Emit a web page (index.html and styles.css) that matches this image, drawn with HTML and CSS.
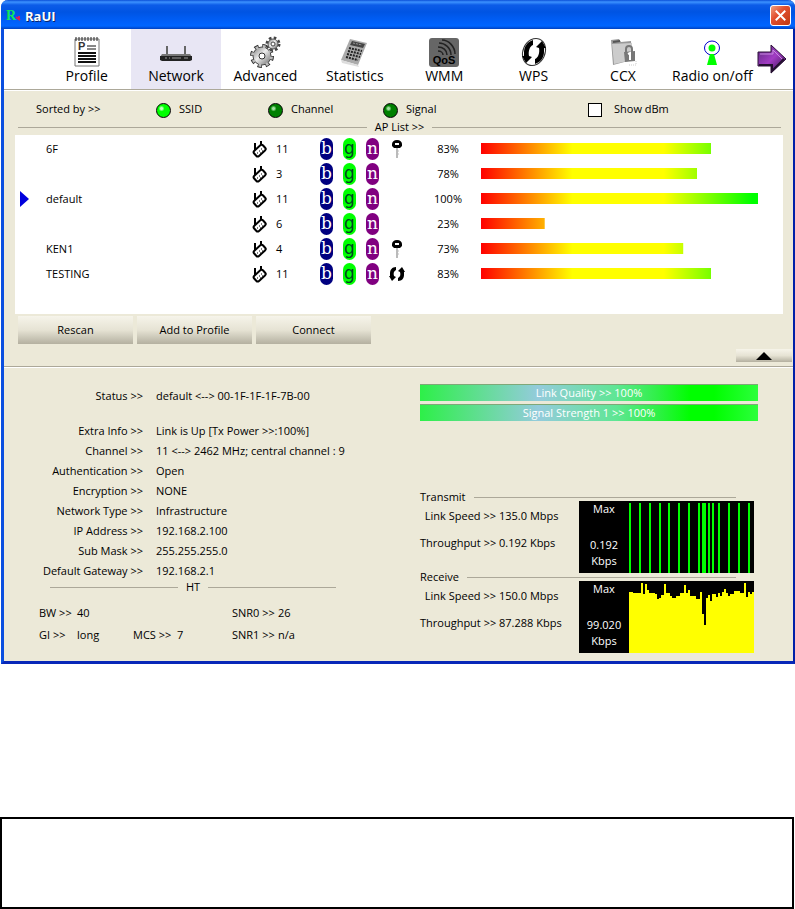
FILE: index.html
```html
<!DOCTYPE html>
<html lang="en">
<head>
  <meta charset="UTF-8" />
  <meta name="viewport" content="width=device-width, initial-scale=1.0" />
  <title>RaUI</title>
  <link rel="stylesheet" href="styles.css">
</head>
<body>

<!-- shared list icons -->
<svg class="sprite" aria-hidden="true">
  <symbol id="i-ap" viewBox="0 0 16 18">
    <path d="M3 3v9M9 1v7" stroke="#000" stroke-width="2"/>
    <rect x="2" y="7" width="12" height="7" rx="2" fill="#fff" stroke="#000" stroke-width="2" transform="rotate(-42 8 11)"/>
    <path d="M5 13h1M7 11h1M9 9h1M8 13h1M10 11h1" stroke="#000"/>
  </symbol>
  <symbol id="i-key" viewBox="0 0 16 20">
    <path d="M8 9v10" stroke="#bbb" stroke-width="2"/>
    <path d="M9 12h1M9 15h1" stroke="#bbb"/>
    <path d="M3 5c0-2 2-4 5-4s5 2 5 4v2l-2 2H5L3 7z" fill="#000"/>
    <path d="M6 5h4" stroke="#fff" stroke-width="2"/>
  </symbol>
  <symbol id="i-wps" viewBox="0 0 16 16">
    <path d="M7 1C3 1 1 4 1 7v3H0l3 5 4-4-2-1c-1-3 0-5 2-6z"/>
    <path d="M9 15c4 0 6-3 6-6V6h1l-3-5-4 4 2 1c1 3 0 5-2 6z"/>
  </symbol>
</svg>

<main class="window">
  <header class="titlebar">
    <svg class="app-icon" viewBox="0 0 16 16" aria-hidden="true">
      <text x="0" y="12" font-family="Liberation Serif, serif" font-size="14" font-weight="bold" fill="#10e860">R</text>
      <path d="M10 9l4 3M13 8v4" stroke="#d8205a" stroke-width="2"/>
    </svg>
    <h1>RaUI</h1>
    <button class="close" aria-label="Close">
      <svg viewBox="0 0 20 20"><path d="M5 5l10 10M15 5L5 15" stroke="#fff" stroke-width="2"/></svg>
    </button>
  </header>

  <nav class="toolbar">
    <button class="tool">
      <svg viewBox="0 0 34 32" aria-hidden="true">
        <path d="M5 3h24v27H5z" fill="#fff" stroke="#777"/>
        <path d="M6 1v4M9 1v4M12 1v4M15 1v4M18 1v4M21 1v4M24 1v4M27 1v4" stroke="#222"/>
        <text x="8" y="14" font-family="Liberation Sans, sans-serif" font-size="11" font-weight="bold" fill="#333">P</text>
        <path d="M17 10h9M17 13h9" stroke="#111"/>
        <path d="M8 17h18M8 20h18M8 23h18M8 26h18" stroke="#111" stroke-width="2"/>
      </svg>
      Profile
    </button>
    <button class="tool active">
      <svg viewBox="0 0 34 32" aria-hidden="true">
        <path d="M8 10v9M26 10v9" stroke="#666" stroke-width="2"/>
        <path d="M3 18h28l2 3H1z" fill="#777"/>
        <path d="M1 20h32v4l-2 1H3l-2-1z" fill="#222"/>
        <path d="M6 22h2M10 22h1M13 22h9M25 22h4" stroke="#999"/>
      </svg>
      Network
    </button>
    <button class="tool">
      <svg viewBox="0 0 34 32" aria-hidden="true">
        <defs>
          <linearGradient id="metal" x1="0" y1="0" x2="1" y2="1">
            <stop offset="0" stop-color="#777"/><stop offset=".45" stop-color="#eee"/><stop offset="1" stop-color="#666"/>
          </linearGradient>
        </defs>
        <circle cx="14" cy="20" r="9.5" fill="none" stroke="#333" stroke-width="5" stroke-dasharray="4 3.46"/>
        <circle cx="14" cy="20" r="9" fill="url(#metal)" stroke="#444"/>
        <circle cx="14" cy="20" r="9.5" fill="none" stroke="#bbb" stroke-width="3" stroke-dasharray="2.6 4.86" stroke-dashoffset="-.7"/>
        <circle cx="14" cy="20" r="3" fill="#fff" stroke="#333"/>
        <circle cx="25" cy="8" r="6" fill="none" stroke="#444" stroke-width="3" stroke-dasharray="2.5 2.21"/>
        <circle cx="25" cy="8" r="5" fill="url(#metal)" stroke="#555"/>
        <circle cx="25" cy="8" r="2" fill="#fff" stroke="#444"/>
      </svg>
      Advanced
    </button>
    <button class="tool">
      <svg viewBox="0 0 34 32" aria-hidden="true">
        <path d="M12 3l17 4-9 22-17-5z" fill="#aaa"/>
        <path d="M3 24l17 5 1 2-17-4z" fill="#ddd"/>
        <path d="M14 5l13 3-2 4-13-3z" fill="#444"/>
        <path d="M15 7l9 2" stroke="#999" stroke-dasharray="2 1"/>
        <path d="M11 12l13 3M10 15l13 3M9 18l13 3M8 21l12 3" stroke="#222" stroke-width="2" stroke-dasharray="2 1"/>
      </svg>
      Statistics
    </button>
    <button class="tool">
      <svg viewBox="0 0 34 32" aria-hidden="true">
        <rect x="2" y="2" width="30" height="29" rx="3" fill="#666"/>
        <g fill="none" stroke="#222" stroke-width="1.5">
          <path d="M11 15c3 0 5 2 5 4M11 11c5 0 9 3 9 8M12 7c6 0 12 5 12 12M15 4c7 0 13 7 13 14"/>
        </g>
        <text x="17" y="28" text-anchor="middle" font-family="Liberation Sans, sans-serif" font-size="11" font-weight="bold" fill="#000">QoS</text>
      </svg>
      WMM
    </button>
    <button class="tool">
      <svg viewBox="0 0 34 32" aria-hidden="true">
        <ellipse cx="17" cy="16" rx="11" ry="14" fill="#fff" stroke="#333" transform="rotate(24 17 16)"/>
        <path d="M16 4C10 6 7 11 7 16l0 4-2 0 4 7 6-6-3-1c-1-5 1-10 4-11z"/>
        <path d="M18 28c6-2 9-7 9-12l0-4 2 0-4-7-6 6 3 1c1 5-1 10-4 11z"/>
      </svg>
      WPS
    </button>
    <button class="tool">
      <svg viewBox="0 0 34 32" aria-hidden="true">
        <path d="M5 4l8-1 2 3 10-1 1 19-19 5z" fill="#999"/>
        <path d="M6 8l20-1v17L8 28z" fill="#ccc"/>
        <path d="M7 6l7-1" stroke="#555" stroke-width="2"/>
        <path d="M20 17v-4c0-4 6-4 6 0v4" fill="none" stroke="#777" stroke-width="2"/>
        <path d="M18 16l11-1v10l-10 1z" fill="#777"/>
        <path d="M22 18l2-1v7" fill="none" stroke="#fff" stroke-width="2"/>
        <path d="M23 29h7M30 25v4" stroke="#ccc" stroke-dasharray="1 1"/>
      </svg>
      CCX
    </button>
    <button class="tool">
      <svg viewBox="0 0 34 32" aria-hidden="true">
        <ellipse cx="17" cy="12" rx="7.5" ry="7" fill="#fff" stroke="#00c"/>
        <circle cx="17" cy="12" r="3.5" fill="#0f0"/>
        <path d="M15 18h4l3 11H12z" fill="#0f0"/>
      </svg>
      Radio on/off
    </button>
    <button class="more" aria-label="More">
      <svg viewBox="0 0 30 30">
        <defs>
          <linearGradient id="purple" x1="0" y1="0" x2="1" y2="1">
            <stop offset="0" stop-color="#5a2a7c"/><stop offset=".5" stop-color="#a23cc4"/><stop offset="1" stop-color="#2a0c40"/>
          </linearGradient>
        </defs>
        <path d="M1 8h13V1l15 14-15 14v-7H1z" fill="url(#purple)" stroke="#2c1038"/>
        <path d="M3 10h13V6l9 9" fill="none" stroke="#c88ae0"/>
        <path d="M2 21h13v6l12-12" fill="none" stroke="#241030" stroke-width="2"/>
      </svg>
    </button>
  </nav>

  <section class="ap-panel">
    <div class="sortbar">
      <span>Sorted by &gt;&gt;</span>
      <label><input class="led" type="radio" name="sort" checked> SSID</label>
      <label><input class="led" type="radio" name="sort"> Channel</label>
      <label><input class="led" type="radio" name="sort"> Signal</label>
      <label><input class="tick" type="checkbox"> Show dBm</label>
    </div>

    <h2 class="rule rule-mid">AP List &gt;&gt;</h2>

    <div class="ap-list">
      <table>
        <colgroup>
          <col class="c-mark"><col class="c-name"><col class="c-ap"><col class="c-chan">
          <col class="c-modes"><col class="c-sec"><col class="c-pct"><col>
        </colgroup>
        <tbody>
          <tr>
            <td></td><td>6F</td><td><svg class="ap"><use href="#i-ap"/></svg></td><td>11</td>
            <td><span class="mode b">b</span><span class="mode g">g</span><span class="mode n">n</span></td>
            <td><svg class="sec"><use href="#i-key"/></svg></td>
            <td>83%</td><td><div class="level" style="--level: 83"></div></td>
          </tr>
          <tr>
            <td></td><td></td><td><svg class="ap"><use href="#i-ap"/></svg></td><td>3</td>
            <td><span class="mode b">b</span><span class="mode g">g</span><span class="mode n">n</span></td>
            <td></td>
            <td>78%</td><td><div class="level" style="--level: 78"></div></td>
          </tr>
          <tr>
            <td><svg class="mark" viewBox="0 0 9 16"><path d="M0 0l9 8-9 8z" fill="#00d"/></svg></td>
            <td>default</td><td><svg class="ap"><use href="#i-ap"/></svg></td><td>11</td>
            <td><span class="mode b">b</span><span class="mode g">g</span><span class="mode n">n</span></td>
            <td></td>
            <td>100%</td><td><div class="level" style="--level: 100"></div></td>
          </tr>
          <tr>
            <td></td><td></td><td><svg class="ap"><use href="#i-ap"/></svg></td><td>6</td>
            <td><span class="mode b">b</span><span class="mode g">g</span><span class="mode n">n</span></td>
            <td></td>
            <td>23%</td><td><div class="level" style="--level: 23"></div></td>
          </tr>
          <tr>
            <td></td><td>KEN1</td><td><svg class="ap"><use href="#i-ap"/></svg></td><td>4</td>
            <td><span class="mode b">b</span><span class="mode g">g</span><span class="mode n">n</span></td>
            <td><svg class="sec"><use href="#i-key"/></svg></td>
            <td>73%</td><td><div class="level" style="--level: 73"></div></td>
          </tr>
          <tr>
            <td></td><td>TESTING</td><td><svg class="ap"><use href="#i-ap"/></svg></td><td>11</td>
            <td><span class="mode b">b</span><span class="mode g">g</span><span class="mode n">n</span></td>
            <td><svg class="sec"><use href="#i-wps"/></svg></td>
            <td>83%</td><td><div class="level" style="--level: 83"></div></td>
          </tr>
        </tbody>
      </table>
    </div>

    <div class="actions">
      <button class="btn">Rescan</button>
      <button class="btn">Add to Profile</button>
      <button class="btn">Connect</button>
      <button class="btn collapse" aria-label="Hide details">
        <svg viewBox="0 0 16 8"><path d="M8 0l8 8H0z"/></svg>
      </button>
    </div>
  </section>

  <section class="details">
    <div class="status">
      <dl class="info">
        <dt>Status &gt;&gt;</dt><dd>default &lt;--&gt; 00-1F-1F-1F-7B-00</dd>
      </dl>
      <dl class="info">
        <dt>Extra Info &gt;&gt;</dt><dd>Link is Up [Tx Power &gt;&gt;:100%]</dd>
        <dt>Channel &gt;&gt;</dt><dd>11 &lt;--&gt; 2462 MHz; central channel : 9</dd>
        <dt>Authentication &gt;&gt;</dt><dd>Open</dd>
        <dt>Encryption &gt;&gt;</dt><dd>NONE</dd>
        <dt>Network Type &gt;&gt;</dt><dd>Infrastructure</dd>
        <dt>IP Address &gt;&gt;</dt><dd>192.168.2.100</dd>
        <dt>Sub Mask &gt;&gt;</dt><dd>255.255.255.0</dd>
        <dt>Default Gateway &gt;&gt;</dt><dd>192.168.2.1</dd>
      </dl>
      <h2 class="rule rule-mid rule-ht">HT</h2>
      <div class="ht">
        <span>BW &gt;&gt;</span><span>40</span><span></span><span></span><span>SNR0 &gt;&gt;</span><span>26</span>
        <span>GI &gt;&gt;</span><span>long</span><span>MCS &gt;&gt;</span><span>7</span><span>SNR1 &gt;&gt;</span><span>n/a</span>
      </div>
    </div>

    <div class="signal">
      <div class="quality">Link Quality &gt;&gt; 100%</div>
      <div class="quality">Signal Strength 1 &gt;&gt; 100%</div>

      <h2 class="rule rule-traffic first">Transmit</h2>
      <div class="traffic">
        <dl class="rates">
          <dt>Link Speed &gt;&gt;</dt><dd>135.0 Mbps</dd>
          <dt>Throughput &gt;&gt;</dt><dd>0.192 Kbps</dd>
        </dl>
        <div class="chart">
          <div class="scale"><span>Max</span><span>0.192<br>Kbps</span></div>
          <svg viewBox="0 0 125 72" preserveAspectRatio="none" shape-rendering="crispEdges" aria-hidden="true">
            <path fill="#0f0" d="M0 2h2v70h-2zM10 2h2v70h-2zM20 2h2v70h-2zM30 2h2v70h-2zM39 2h2v70h-2zM49 2h2v70h-2zM59 2h2v70h-2zM69 2h2v70h-2zM73 2h4v70h-4zM79 2h2v70h-2zM83 2h2v70h-2zM89 2h2v70h-2zM99 2h2v70h-2zM109 2h2v70h-2zM119 2h2v70h-2z"/>
          </svg>
        </div>
      </div>

      <h2 class="rule rule-traffic">Receive</h2>
      <div class="traffic">
        <dl class="rates">
          <dt>Link Speed &gt;&gt;</dt><dd>150.0 Mbps</dd>
          <dt>Throughput &gt;&gt;</dt><dd>87.288 Kbps</dd>
        </dl>
        <div class="chart">
          <div class="scale"><span>Max</span><span>99.020<br>Kbps</span></div>
          <svg viewBox="0 0 125 72" preserveAspectRatio="none" shape-rendering="crispEdges" aria-hidden="true">
            <path fill="#ff0" d="M0 72V11h4V12h8V2h2V13h2V3h2V9h2V12h6V13h2V18h2V17h2V14h3V3h2V12h4V15h2V17h4V15h4V12h4V4h2V12h2V9h2V15h6V18h4V11h2V33h2V44h2V17h2V14h2V20h2V13h4V16h2V12h2V15h2V11h2V8h2V12h2V15h2V13h4V10h6V12h4V2h2V16h2V11h2V13h2V11h2V72z"/>
          </svg>
        </div>
      </div>
    </div>
  </section>
</main>

<div class="note-box"></div>

</body>
</html>
```
FILE: styles.css
```css
:root {
  --face: #ece9d8;
  --line: #aca899;
}

* {
  box-sizing: border-box;
}

body {
  margin: 0;
  background: #fff;
  color: #000;
  font-family: "Open Sans", "Noto Sans", sans-serif;
  font-size: 11px;
  line-height: 20px;
}

button {
  font: inherit;
  color: inherit;
  border: none;
  padding: 0;
  background: none;
}

h1, h2, dl, dd {
  margin: 0;
}

svg {
  display: block;
}

.sprite {
  display: none;
}

/* window frame */
.window {
  margin-left: 1px;
  border: solid #0a3fd0;
  border-width: 0 2px 3px 3px;
  border-color: #0a3fd0 #0020a8 #0828b8 #0a4fe0;
  border-radius: 7px 7px 0 0;
  background: var(--face);
}

.titlebar {
  display: flex;
  align-items: center;
  height: 29px;
  margin: 0 -2px 0 -3px;
  padding: 2px 4px 0 5px;
  border-radius: 7px 7px 0 0;
  background: linear-gradient(#0a4fd8 0, #3c92ff 2px, #0c5ce8 5px, #0054e3 12px, #0060fa 22px, #0066ff 26px, #0040c0 29px);
}

.titlebar h1 {
  flex: 1;
  color: #fff;
  font-size: 13px;
  font-weight: bold;
  text-shadow: 1px 1px #0a246a;
}

.app-icon {
  width: 16px;
  height: 16px;
  margin-right: 3px;
}

.close {
  width: 21px;
  height: 21px;
  border: 1px solid #fff;
  border-radius: 3px;
  background: linear-gradient(135deg, #f0a080, #e25030 40%, #c03810);
}

/* toolbar */
.toolbar {
  display: grid;
  grid-template-columns: repeat(8, 1fr) 36px;
  padding-left: 38px;
  background: #fff;
  border-bottom: 1px solid var(--line);
}

.tool {
  display: flex;
  flex-direction: column;
  align-items: center;
  justify-content: flex-start;
  height: 60px;
  padding-top: 7px;
  font-size: 14px;
  line-height: 16px;
  white-space: nowrap;
}

.tool svg {
  flex: none;
  width: 34px;
  height: 32px;
}

.tool.active {
  background: #e8e6f4;
}

.more svg {
  width: 30px;
  height: 30px;
}

/* sort options */
.ap-panel {
  padding-bottom: 4px;
  border-bottom: 1px solid var(--line);
}

.sortbar {
  display: grid;
  grid-template-columns: 120fr 112fr 115fr 205fr 205fr;
  height: 32px;
  padding: 4px 0 0 32px;
  align-items: center;
  border-top: 1px solid #fff;
}

.sortbar label {
  display: flex;
  align-items: center;
  gap: 8px;
}

.led {
  appearance: none;
  width: 15px;
  height: 15px;
  margin: 3px 0 0;
  border: 1px solid #000;
  border-radius: 50%;
  background: radial-gradient(circle at 35% 35%, #a0e0a0 1px, #008000 3px);
}

.led:checked {
  background: radial-gradient(circle at 35% 35%, #c0ffc0 1px, #0f0 3px);
}

.tick {
  appearance: none;
  width: 14px;
  height: 14px;
  margin: 3px 4px 0 0;
  border: 1px solid #000;
  background: #fff;
}

/* headings on a line */
.rule {
  display: flex;
  align-items: center;
  gap: 8px;
  height: 10px;
  font-size: 11px;
  font-weight: normal;
  line-height: 10px;
}

.rule::before,
.rule::after {
  content: "";
  flex: 1;
  height: 1px;
  background: var(--line);
}

.ap-panel .rule {
  margin: 0 12px 3px 14px;
}

/* access points */
.ap-list {
  min-height: 179px;
  margin: 0 10px 0 11px;
  padding-top: 1px;
  background: #fff;
}

.ap-list table {
  width: 100%;
  table-layout: fixed;
  border-collapse: collapse;
}

.ap-list td {
  height: 25px;
  padding: 0;
  white-space: nowrap;
}

.c-mark { width: 31px; }
.c-name { width: 206px; }
.c-ap { width: 24px; }
.c-chan { width: 44px; }
.c-modes { width: 69px; }
.c-sec { width: 30px; }
.c-pct { width: 62px; }

.ap-list td:nth-child(7) {
  padding-right: 4px;
  text-align: center;
}

.mark {
  width: 9px;
  height: 16px;
  margin-left: 5px;
}

.ap {
  width: 16px;
  height: 18px;
}

.sec {
  width: 16px;
  height: 20px;
}

.mode {
  display: inline-block;
  width: 13px;
  height: 22px;
  margin-right: 10px;
  border-radius: 7px;
  color: #fff;
  font-family: "DejaVu Serif", serif;
  font-size: 17px;
  line-height: 20px;
  text-align: center;
  vertical-align: middle;
}

.mode.b { background: #000080; }
.mode.g { background: #0f0; color: #042; font-family: "DejaVu Sans", sans-serif; }
.mode.n { background: #800080; margin-right: 0; }

.level {
  height: 11px;
  margin-right: 25px;
  background: linear-gradient(90deg, #f00, #ff0 33%, #ff0 66%, #0f0 98%);
  clip-path: inset(0 calc(100% - var(--level) * 1%) 0 0);
}

/* buttons */
.actions {
  display: flex;
  gap: 4px;
  padding: 2px 0 0 14px;
}

.btn {
  width: 115px;
  height: 28px;
  background: linear-gradient(#f6f4ea, #e6e3d4 50%, #b4b0a0);
}

.collapse {
  width: 56px;
  height: 13px;
  margin: 33px 1px 0 auto;
}

.collapse svg {
  width: 16px;
  height: 8px;
  margin: 0 auto;
}

/* connection details */
.details {
  display: grid;
  grid-template-columns: 416fr 373fr;
  padding: 16px 0 8px;
  border-top: 1px solid #fff;
}

.status {
  padding-top: 2px;
}

.info {
  display: grid;
  grid-template-columns: 139px 1fr;
  column-gap: 13px;
}

.info + .info {
  margin-top: 15px;
}

.info dt {
  text-align: right;
}

.rule-ht {
  height: 12px;
  margin: 0 84px 0 46px;
}

.ht {
  display: grid;
  grid-template-columns: 38px 56px 44px 55px 46px 1fr;
  row-gap: 2px;
  margin: 10px 0 0 35px;
}

/* link quality and traffic */
.signal {
  padding-right: 35px;
}

.quality {
  height: 17px;
  margin-bottom: 3px;
  border-top: 1px solid #7fa878;
  background: linear-gradient(90deg, #2df048, #94cbdc 35%, #5fe694 58%, #30f048 70%, #0f0 80%, #0f0 87%, #2cff3c);
  color: #fff;
  line-height: 16px;
  text-align: center;
}

.rule-traffic {
  height: 8px;
  margin-right: 22px;
  line-height: 8px;
}

.rule-traffic::before {
  display: none;
}

.rule-traffic.first {
  margin-top: 72px;
}

.traffic {
  display: flex;
  padding-right: 4px;
}

.rates {
  display: grid;
  grid-template-columns: 76px 1fr;
  column-gap: 3px;
  row-gap: 7px;
  align-content: start;
  flex: 1;
  padding-top: 5px;
  white-space: nowrap;
}

.rates dt {
  text-align: right;
}

.chart {
  display: flex;
  width: 175px;
  height: 72px;
  background: #000;
  color: #fff;
}

.chart svg {
  flex: 1;
  height: 72px;
}

.scale {
  display: flex;
  flex-direction: column;
  justify-content: space-between;
  width: 50px;
  padding-bottom: 4px;
  line-height: 16px;
  text-align: center;
}

/* empty note under the window */
.note-box {
  height: 92px;
  margin: 153px 1px 0 0;
  border: 2px solid #000;
}
```
